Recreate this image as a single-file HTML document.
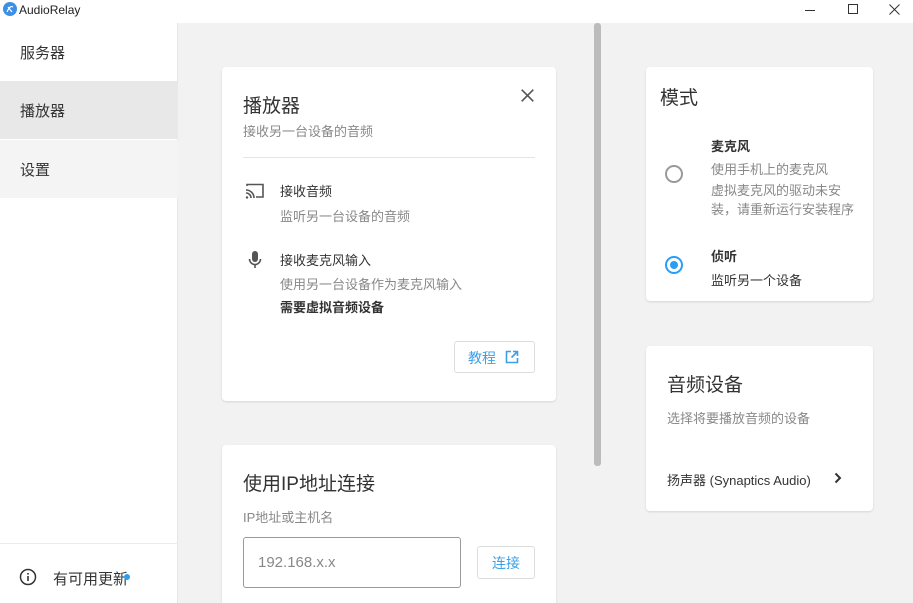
<!DOCTYPE html>
<html><head><meta charset="utf-8"><style>
*{margin:0;padding:0;box-sizing:border-box}
html,body{width:913px;height:603px;overflow:hidden}
body{background:#f2f2f2;font-family:"Liberation Sans","Noto Sans CJK SC",sans-serif;color:#333;position:relative}
.abs{position:absolute}
.title{left:0;top:0;width:913px;height:23px;background:#fff}
.side{left:0;top:23px;width:178px;height:580px;background:#fff;border-right:1px solid #e6e6e6}
.item{position:absolute;left:0;width:178px;height:58px;font-size:15px;padding-left:20px;line-height:62px;color:#333}
.card{position:absolute;background:#fff;border-radius:4px;box-shadow:0 1px 2px rgba(0,0,0,.12)}
.h{font-size:19px;color:#333}
.sub{font-size:13px;color:#888}
.t{font-size:13px;color:#333}
</style></head><body>
<div class="abs title">
<svg class="abs" style="left:3px;top:2px" width="14" height="14" viewBox="0 0 14 14"><circle cx="7" cy="7" r="7" fill="#3d8fe6"/><path d="M4 10 Q7 3 10 5 M5 5 L9 10" stroke="#fff" stroke-width="1.2" fill="none"/></svg>
<div class="abs" style="left:19px;top:3px;font-size:12px;color:#222">AudioRelay</div>
<div class="abs" style="left:805px;top:10px;width:10px;height:1px;background:#333"></div>
<div class="abs" style="left:848px;top:4px;width:10px;height:10px;border:1px solid #333"></div>
<svg class="abs" style="left:889px;top:4px" width="11" height="11" viewBox="0 0 11 11"><path d="M.5 .5l10 10M10.5 .5l-10 10" stroke="#333" stroke-width="1"/></svg>
</div>
<div class="abs side">
<div class="item" style="top:0">服务器</div>
<div class="item" style="top:58px;background:#e8e8e8">播放器</div>
<div class="item" style="top:117px;background:#f4f4f4">设置</div>
<div class="abs" style="left:0;top:520px;width:178px;height:1px;background:#ececec"></div>
<svg class="abs" style="left:19px;top:545px" width="18" height="18" viewBox="0 0 18 18"><circle cx="9" cy="9" r="7.5" stroke="#333" stroke-width="1.5" fill="none"/><rect x="8.2" y="8" width="1.6" height="5" fill="#333"/><rect x="8.2" y="5" width="1.6" height="1.6" fill="#333"/></svg>
<div class="abs" style="left:53px;top:545px;font-size:15px;color:#333">有可用更新</div>
<div class="abs" style="left:124px;top:551px;width:6px;height:6px;border-radius:50%;background:#2a9df4"></div>
</div>
<div class="abs" style="left:594px;top:23px;width:7px;height:443px;background:#bcbcbc;border-radius:3px"></div>

<div class="card" style="left:222px;top:67px;width:334px;height:334px">
<div class="abs h" style="left:21px;top:24px">播放器</div>
<svg class="abs" style="left:299px;top:22px" width="13" height="13" viewBox="0 0 13 13"><path d="M.7 .7l11.6 11.6M12.3 .7L.7 12.3" stroke="#555" stroke-width="1.6"/></svg>
<div class="abs sub" style="left:21px;top:54px">接收另一台设备的音频</div>
<div class="abs" style="left:21px;top:90px;width:292px;height:1px;background:#e4e4e4"></div>
<svg class="abs" style="left:22px;top:115px" width="22" height="18" viewBox="0 0 22 18"><path d="M3 4V2.5h16V15h-7" stroke="#555" stroke-width="1.6" fill="none"/><path d="M2 8a8 8 0 0 1 8 8M2 11a5 5 0 0 1 5 5" stroke="#555" stroke-width="1.6" fill="none"/><circle cx="3" cy="15.5" r="1.2" fill="#555"/></svg>
<div class="abs t" style="left:58px;top:114px">接收音频</div>
<div class="abs sub" style="left:58px;top:139px">监听另一台设备的音频</div>
<svg class="abs" style="left:26px;top:183px" width="14" height="20" viewBox="0 0 14 20"><rect x="4" y="1" width="6" height="11" rx="3" fill="#555"/><path d="M1.5 9a5.5 5.5 0 0 0 11 0M7 14.5V18" stroke="#555" stroke-width="1.6" fill="none"/></svg>
<div class="abs t" style="left:58px;top:183px">接收麦克风输入</div>
<div class="abs sub" style="left:58px;top:207px">使用另一台设备作为麦克风输入</div>
<div class="abs t" style="left:58px;top:230px;font-weight:bold">需要虚拟音频设备</div>
<div class="abs" style="left:232px;top:274px;width:81px;height:32px;border:1px solid #ddd;border-radius:3px;color:#3aa0e8;font-size:14px;line-height:32px;padding-left:13px">教程
<svg class="abs" style="left:50px;top:8px" width="14" height="14" viewBox="0 0 14 14"><path d="M6 1.5H1.5v11h11V8M8 1.5h4.5V6M12.5 1.5 6.5 7.5" stroke="#3aa0e8" stroke-width="1.6" fill="none"/></svg></div>
</div>

<div class="card" style="left:222px;top:445px;width:334px;height:170px">
<div class="abs h" style="left:21px;top:24px">使用IP地址连接</div>
<div class="abs sub" style="left:21px;top:62px">IP地址或主机名</div>
<div class="abs" style="left:21px;top:92px;width:218px;height:51px;border:1px solid #999;border-radius:3px;font-size:15px;color:#888;line-height:49px;padding-left:14px">192.168.x.x</div>
<div class="abs" style="left:255px;top:101px;width:58px;height:33px;border:1px solid #ddd;border-radius:3px;color:#3aa0e8;font-size:14px;line-height:33px;text-align:center">连接</div>
</div>

<div class="card" style="left:646px;top:67px;width:227px;height:234px">
<div class="abs h" style="left:14px;top:16px">模式</div>
<div class="abs t" style="left:65px;top:69px;font-weight:bold">麦克风</div>
<div class="abs sub" style="left:65px;top:92px">使用手机上的麦克风</div>
<div class="abs sub" style="left:65px;top:114px;width:150px;line-height:19px">虚拟麦克风的驱动未安装，请重新运行安装程序</div>
<div class="abs" style="left:19px;top:98px;width:18px;height:18px;border:2px solid #999;border-radius:50%"></div>
<div class="abs t" style="left:65px;top:179px;font-weight:bold">侦听</div>
<div class="abs t" style="left:65px;top:203px">监听另一个设备</div>
<div class="abs" style="left:19px;top:189px;width:18px;height:18px;border:2px solid #2a9df4;border-radius:50%"><div style="margin:3px;width:8px;height:8px;border-radius:50%;background:#2a9df4"></div></div>
</div>

<div class="card" style="left:646px;top:346px;width:227px;height:165px">
<div class="abs h" style="left:21px;top:24px">音频设备</div>
<div class="abs sub" style="left:21px;top:62px">选择将要播放音频的设备</div>
<div class="abs t" style="left:21px;top:124px">扬声器 (Synaptics Audio)</div>
<svg class="abs" style="left:188px;top:126px" width="8" height="12" viewBox="0 0 8 12"><path d="M1.5 1.5 6 6 1.5 10.5" stroke="#333" stroke-width="2" fill="none"/></svg>
</div>
</body></html>
